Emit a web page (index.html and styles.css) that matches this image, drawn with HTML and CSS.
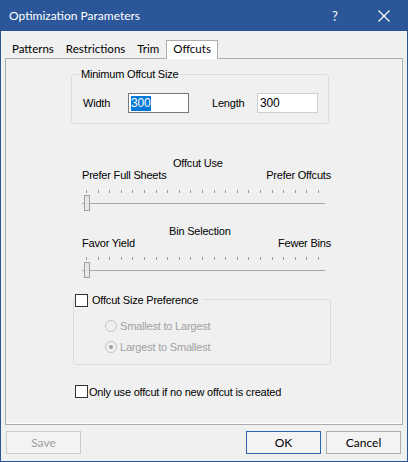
FILE: index.html
```html
<!DOCTYPE html>
<html>
<head>
<meta charset="utf-8">
<link rel="stylesheet" href="styles.css">
</head>
<body>
<div class="window">
  <div class="titlebar">
    <span class="title">Optimization Parameters</span>
    <span class="help">?</span>
    <span class="close">
      <svg width="12" height="12" viewBox="0 0 12 12"><path d="M0.5 0.5 L11.5 11.5 M11.5 0.5 L0.5 11.5" stroke="#fff" stroke-width="1.2" fill="none"/></svg>
    </span>
  </div>
  <div class="tabstrip">
    <span class="tab">Patterns</span>
    <span class="tab">Restrictions</span>
    <span class="tab">Trim</span>
    <span class="tab active">Offcuts</span>
  </div>
  <div class="page">
    <div class="group size-group">
      <span class="group-title">Minimum Offcut Size</span>
      <div class="field-row">
        <span class="field-label">Width</span>
        <span class="textbox focused"><span class="sel">300</span></span>
        <span class="field-label length">Length</span>
        <span class="textbox">300</span>
      </div>
    </div>

    <div class="slider first">
      <div class="slider-title t1">Offcut Use</div>
      <div class="slider-labels"><span>Prefer Full Sheets</span><span>Prefer Offcuts</span></div>
      <div class="ticks">
        <i></i><i></i><i></i><i></i><i></i><i></i><i></i><i></i><i></i><i></i><i></i><i></i><i></i><i></i><i></i><i></i><i></i><i></i><i></i><i></i><i></i>
      </div>
      <div class="track-wrap"><div class="track"></div><div class="thumb"></div></div>
    </div>

    <div class="slider second">
      <div class="slider-title t2">Bin Selection</div>
      <div class="slider-labels"><span>Favor Yield</span><span>Fewer Bins</span></div>
      <div class="ticks">
        <i></i><i></i><i></i><i></i><i></i><i></i><i></i><i></i><i></i><i></i><i></i><i></i><i></i><i></i><i></i><i></i><i></i><i></i><i></i><i></i><i></i>
      </div>
      <div class="track-wrap"><div class="track"></div><div class="thumb"></div></div>
    </div>

    <div class="group pref-group">
      <span class="group-title check-title"><span class="checkbox"></span><span>Offcut Size Preference</span></span>
      <div class="radio-row"><span class="radio"></span><span>Smallest to Largest</span></div>
      <div class="radio-row"><span class="radio checked"></span><span>Largest to Smallest</span></div>
    </div>

    <div class="check-row"><span class="checkbox"></span><span>Only use offcut if no new offcut is created</span></div>
  </div>
  <div class="buttons">
    <span class="btn disabled">Save</span>
    <span class="spacer"></span>
    <span class="btn default">OK</span>
    <span class="btn">Cancel</span>
  </div>
</div>
</body>
</html>
```
FILE: styles.css
```css
* { box-sizing: border-box; }
html, body { margin: 0; padding: 0; background: #f0f0f0; }
body { font-family: "Liberation Sans", Arial, sans-serif; font-size: 11px; letter-spacing: -0.2px; color: #000; }

.window {
  width: 408px;
  height: 462px;
  border: 1px solid #2b579a;
  border-top: 0;
  background: #f0f0f0;
  display: flex;
  flex-direction: column;
}

.titlebar {
  height: 31px;
  margin: 0 -1px;
  background: #2b579a;
  color: #fff;
  display: flex;
  align-items: center;
  font-family: Lato, "Noto Sans", sans-serif;
  font-size: 12px;
  letter-spacing: 0;
}
.title { padding-left: 9px; flex: 1; }
.help { width: 14px; margin-right: 32px; font-size: 13px; }
.close { width: 12px; height: 12px; margin-right: 18px; display: flex; }

.tabstrip {
  height: 27px;
  display: flex;
  align-items: flex-end;
  padding-left: 5px;
  font-family: Lato, "Noto Sans", sans-serif;
  font-size: 11.5px;
  letter-spacing: 0;
}
.tab {
  height: 18px;
  line-height: 16px;
  padding: 0 5px;
  border: 1px solid transparent;
  border-bottom: 0;
}
.tab.active {
  height: 19px;
  margin-left: 1px;
  padding: 0 6px;
  margin-bottom: -1px;
  background: #fff;
  border-color: #adadad;
  position: relative;
}

.page {
  margin: 0 4px;
  height: 367px;
  border: 1px solid #adadad;
  box-shadow: inset -1px -1px 0 #fff;
  background: #f0f0f0;
}

.group {
  position: relative;
  border: 1px solid #dcdcdc;
  border-radius: 3px;
}
.group-title {
  position: absolute;
  top: -7px;
  left: 7px;
  padding: 0 2px;
  line-height: 13px;
  background: #f0f0f0;
}

.size-group {
  margin: 15px 0 0 65px;
  width: 258px;
  height: 50px;
}
.field-row {
  display: flex;
  align-items: center;
  margin: 18px 0 0 11px;
  height: 20px;
}
.field-label { width: 45px; }
.field-label.length { margin-left: 23px; }
.textbox {
  width: 61px;
  height: 20px;
  border: 1px solid #cfcfcf;
  background: #fff;
  padding: 1px 0 0 2px;
  line-height: 16px;
  font-size: 12px;
}
.textbox.focused { border-color: #7a7a7a; }
.sel { background: #0078d7; color: #fff; display: inline-block; line-height: 15px; padding-right: 1px; }

.slider { margin-left: 76px; width: 249px; }
.slider.first { margin-top: 33px; }
.slider.second { margin-top: 14px; }
.slider-title { line-height: 12px; height: 12px; }
.t1 { padding-left: 91px; }
.t2 { padding-left: 87px; }
.slider-labels {
  display: flex;
  justify-content: space-between;
  line-height: 13px;
  height: 13px;
}
.first .ticks { margin-top: 8px; }
.second .ticks { margin-top: 7px; }
.ticks {
  margin-left: 4px;
  width: 233px;
  height: 3px;
  display: flex;
  justify-content: space-between;
}
.ticks i { width: 1px; height: 3px; background: #9a9a9a; display: block; }
.track-wrap {
  position: relative;
  margin-top: 2px;
  width: 243px;
  height: 16px;
  padding-top: 8px;
}
.track { height: 1px; background: #a6a6a6; }
.thumb {
  position: absolute;
  left: 2px;
  top: 0;
  width: 6px;
  height: 16px;
  border: 1px solid #a0a0a0;
  background: #e7e7e7;
}

.pref-group {
  margin: 21px 0 0 67px;
  width: 258px;
  height: 66px;
}
.check-title {
  left: 1px;
  top: -6px;
  padding: 0 4px 0 0;
  display: flex;
  align-items: center;
  gap: 4px;
}
.checkbox {
  width: 13px;
  height: 13px;
  border: 1px solid #333;
  background: #fff;
  display: inline-block;
  flex: none;
}
.radio-row {
  display: flex;
  align-items: center;
  gap: 3px;
  color: #a0a0a0;
  margin-left: 31px;
  height: 13px;
}
.radio-row:first-of-type { margin-top: 19px; }
.radio-row + .radio-row { margin-top: 8px; }
.radio {
  width: 12px;
  height: 12px;
  border: 1px solid #c4c4c4;
  border-radius: 50%;
  background: #f0f0f0;
  position: relative;
  flex: none;
}
.radio.checked::after {
  content: "";
  position: absolute;
  left: 3px;
  top: 3px;
  width: 4px;
  height: 4px;
  border-radius: 50%;
  background: #a0a0a0;
}

.check-row {
  display: flex;
  align-items: center;
  gap: 1px;
  margin: 20px 0 0 69px;
  height: 13px;
}

.buttons {
  display: flex;
  margin: 6px 6px 0 5px;
  gap: 5px;
}
.spacer { flex: 1; }
.btn {
  width: 75px;
  height: 23px;
  border: 1px solid #adadad;
  background: #f3f3f3;
  display: flex;
  align-items: center;
  justify-content: center;
  font-family: Lato, "Noto Sans", sans-serif;
  font-size: 12px;
  letter-spacing: 0;
}
.btn.disabled { color: #a0a0a0; border-color: #cccccc; }
.btn.default { border-color: #2b63ae; }
```
